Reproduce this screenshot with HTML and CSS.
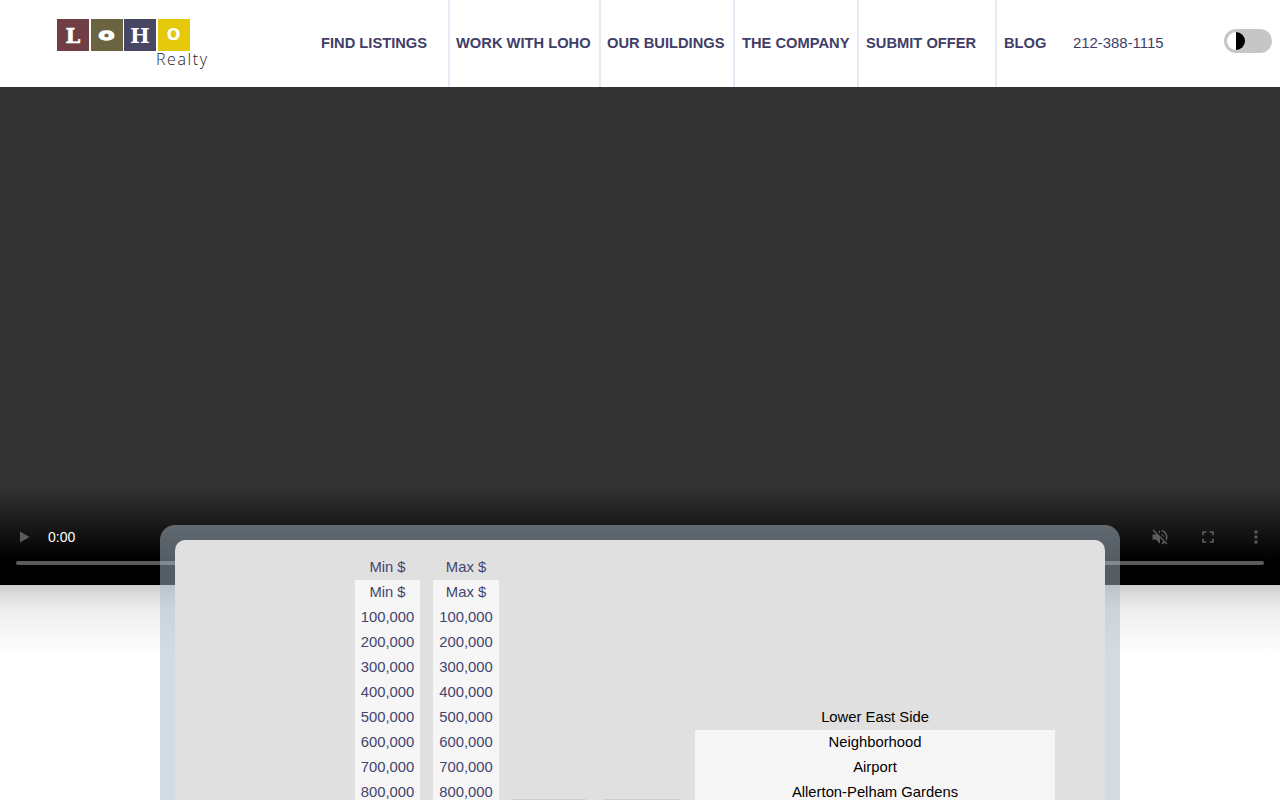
FILE: index.html
```html
<!DOCTYPE html>
<html lang="en">
<head>
<meta charset="utf-8">
<title>LOHO Realty</title>
<link rel="stylesheet" href="styles.css">
</head>
<body>
<header class="site-header">
  <a class="logo" href="#">
    <span class="logo-tiles">
      <span class="tile tile-l">L</span><span class="tile tile-o1"><span class="wide-o">O</span></span><span class="tile tile-h">H</span><span class="tile tile-o2">O</span>
    </span>
    <span class="logo-sub">Realty</span>
  </a>
  <nav class="main-nav">
    <a class="nav-item nav-find" href="#">FIND LISTINGS</a>
    <a class="nav-item nav-work" href="#">WORK WITH LOHO</a>
    <a class="nav-item nav-build" href="#">OUR BUILDINGS</a>
    <a class="nav-item nav-comp" href="#">THE COMPANY</a>
    <a class="nav-item nav-offer" href="#">SUBMIT OFFER</a>
    <a class="nav-item nav-blog" href="#">BLOG</a>
  </nav>
  <span class="phone">212-388-1115</span>
  <span class="toggle"><span class="toggle-knob"></span></span>
</header>

<section class="video">
  <div class="video-controls">
    <div class="controls-row">
      <svg class="ctl-play" width="12" height="14" viewBox="0 0 12 14"><path d="M1 1.500v11l9.500-5.500z" fill="#5c5c5c"/></svg>
      <span class="time">0:00</span>
      <span class="spacer"></span>
      <svg class="ctl-mute" width="20" height="20" viewBox="0 0 24 24"><path fill="#5c5c5c" d="M16.500 12A4.500 4.500 0 0 0 14 7.970v2.210l2.450 2.450c.03-.2.050-.41.050-.63zm2.500 0c0 .94-.2 1.820-.54 2.640l1.510 1.510A8.800 8.800 0 0 0 21 12c0-4.280-2.990-7.860-7-8.770v2.060c2.890.86 5 3.540 5 6.710zM4.270 3 3 4.270 7.730 9H3v6h4l5 5v-6.730l4.250 4.250c-.67.52-1.420.93-2.250 1.180v2.060a8.990 8.990 0 0 0 3.690-1.810L19.730 21 21 19.730l-9-9L4.270 3zM12 4 9.910 6.090 12 8.180V4z"/></svg>
      <svg class="ctl-full" width="20" height="20" viewBox="0 0 24 24"><path fill="#5c5c5c" d="M5 5h5v2H7v3H5zM14 5h5v5h-2V7h-3zM5 14h2v3h3v2H5zM17 14h2v5h-5v-2h3z"/></svg>
      <svg class="ctl-more" width="20" height="20" viewBox="0 0 24 24"><path fill="#5c5c5c" d="M12 8a2 2 0 1 0 0-4 2 2 0 0 0 0 4zm0 2a2 2 0 1 0 0 4 2 2 0 0 0 0-4zm0 6a2 2 0 1 0 0 4 2 2 0 0 0 0-4z"/></svg>
    </div>
    <div class="timeline"></div>
  </div>
</section>

<main class="below">
  <div class="search-panel">
    <form class="search-inner">
      <div class="col col-min">
        <div class="col-label">Min $</div>
        <ul class="list">
          <li>Min $</li><li>100,000</li><li>200,000</li><li>300,000</li><li>400,000</li><li>500,000</li><li>600,000</li><li>700,000</li><li>800,000</li>
        </ul>
      </div>
      <div class="col col-max">
        <div class="col-label">Max $</div>
        <ul class="list">
          <li>Max $</li><li>100,000</li><li>200,000</li><li>300,000</li><li>400,000</li><li>500,000</li><li>600,000</li><li>700,000</li><li>800,000</li>
        </ul>
      </div>
      <div class="col col-a"><div class="stub"></div></div>
      <div class="col col-b"><div class="stub"></div></div>
      <div class="col col-hood">
        <div class="col-label">Lower East Side</div>
        <ul class="list">
          <li>Neighborhood</li><li>Airport</li><li>Allerton-Pelham Gardens</li>
        </ul>
      </div>
    </form>
  </div>
</main>
</body>
</html>
```
FILE: styles.css
```css
* { box-sizing: border-box; }
html, body { margin: 0; height: 800px; overflow: hidden; background: #fff; }
body { font-family: "Liberation Sans", Arial, sans-serif; }
a { text-decoration: none; color: inherit; }
ul { list-style: none; margin: 0; padding: 0; }

.site-header { height: 87px; display: flex; align-items: stretch; background: #fff; color: #3f3e68; }

.logo { width: 313px; padding: 19px 0 0 57px; display: block; }
.logo-tiles { display: flex; gap: 1.500px; width: 133px; }
.tile { width: 32px; height: 32px; display: flex; align-items: center; justify-content: center; color: #fff; font-family: "DejaVu Serif", serif; font-weight: 700; font-size: 21px; line-height: 1; overflow: hidden; }
.tile-l { background: #6f3f45; -webkit-text-stroke: .6px #fff; }
.tile-o1 { background: #6c6340; font-family: "DejaVu Sans", sans-serif; font-size: 13px; -webkit-text-stroke: 1.500px #fff; }
.wide-o { display: block; transform: scaleX(1.400); }
.tile-h { background: #474764; }
.tile-o2 { background: #e5c90a; font-family: "DejaVu Sans", sans-serif; font-size: 16px; }
.logo-sub { display: block; margin: -1px 0 0 99px; font-family: "Open Sans", sans-serif; font-weight: 300; font-size: 16px; line-height: 18px; letter-spacing: 1.600px; color: #222; }

.main-nav { display: flex; }
.nav-item { display: flex; align-items: center; padding-bottom: 1px; border-left: 2px solid #e8e9f6; font-size: 14.700px; font-weight: 700; color: #3f3e68; white-space: nowrap; }
.nav-find { width: 135px; border-left: 0; padding-left: 8px; }
.nav-work { width: 151px; padding-left: 6px; }
.nav-build { width: 134px; padding-left: 6px; }
.nav-comp { width: 124px; padding-left: 7px; }
.nav-offer { width: 138px; padding-left: 7px; }
.nav-blog { width: 77px; padding-left: 7px; }

.phone { display: flex; align-items: center; width: 152px; padding: 0 0 1px 1px; font-size: 14.900px; color: #3f3e68; white-space: nowrap; }
.toggle { align-self: center; position: relative; flex: none; width: 48px; height: 24px; margin-top: -5px; border-radius: 12px; background: #c6c6c6; }
.toggle-knob { position: absolute; left: 3px; top: 3px; width: 18px; height: 18px; border-radius: 50%; background: linear-gradient(90deg, #fff 50%, #000 50%); }

.video { height: 498px; background: #333; display: flex; align-items: flex-end; }
.video-controls { width: 100%; height: 98px; padding: 0 16px 20px; display: flex; flex-direction: column; justify-content: flex-end; background: linear-gradient(180deg, rgba(0,0,0,0) 0%, rgba(0,0,0,.6) 45%, #000 75%); }
.controls-row { display: flex; align-items: center; height: 20px; margin-bottom: 14px; }
.ctl-play { margin-left: 3px; }
.time { margin-left: 17px; color: #fff; font-size: 14px; }
.spacer { flex: 1; }
.ctl-mute, .ctl-full { margin-right: 28px; }
.ctl-more { margin-right: -2px; }
.timeline { height: 4px; border-radius: 2px; background: #5b5b5b; }

.below { display: flow-root; position: relative; height: 215px; background: linear-gradient(180deg, #cfcfcf 0%, #ececec 22px, #f8f8f8 50px, #fff 75px); }
.search-panel { position: relative; width: 960px; height: 275px; margin: -60px 0 0 160px; padding: 15px 15px 0; border-radius: 15px 15px 0 0; background: rgba(170,186,200,.5); }
.search-inner { display: flex; align-items: flex-start; height: 100%; overflow: hidden; background: #e0e0e0; border-radius: 10px 10px 0 0; font-size: 14.800px; color: #44446f; }

.col { text-align: center; flex: none; }
.col-min { width: 65px; margin: 14px 0 0 180px; }
.col-max { width: 66px; margin: 14px 0 0 13px; }
.col-label { height: 26px; line-height: 27px; }
.list { background: #f6f6f6; }
.list li { height: 25px; line-height: 25px; }
.col-a { width: 74px; margin: 259px 0 0 13px; }
.col-b { width: 78px; margin: 259px 0 0 17px; }
.stub { height: 1px; background: #c8d0d6; }
.col-hood { width: 360px; margin: 164px 0 0 14px; color: #000; }
```
